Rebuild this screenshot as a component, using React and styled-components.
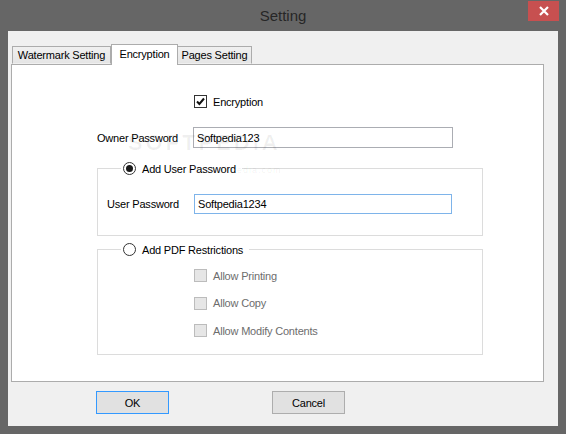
import React from 'react';
import styled, { createGlobalStyle } from 'styled-components';

const GlobalStyle = createGlobalStyle`
  html, body {
    margin: 0;
    padding: 0;
    background: #666666;
  }
  * {
    box-sizing: border-box;
  }
`;

const Window = styled.div`
  position: relative;
  width: 566px;
  height: 434px;
  background: #666666;
  font-family: "Liberation Sans", Arial, sans-serif;
  font-size: 11px;
  letter-spacing: -0.2px;
  color: #000;
  overflow: hidden;
`;

const TitleBar = styled.div`
  display: grid;
  grid-template-columns: 1fr auto 1fr;
  height: 31px;
  padding: 1px 7px 0 7px;
`;

const Title = styled.div`
  grid-column: 2;
  align-self: center;
  font-size: 15px;
  letter-spacing: 0;
  color: #262626;
  margin-top: -1px;
`;

const CloseButton = styled.div`
  grid-column: 3;
  justify-self: end;
  align-self: start;
  width: 31px;
  height: 20px;
  background: #c75050;
  display: flex;
  align-items: center;
  justify-content: center;
`;

const Client = styled.div`
  margin: 0 8px;
  height: 395px;
  background: #f0f0f0;
  padding-top: 13px;
  display: flex;
  flex-direction: column;
`;

const TabStrip = styled.div`
  display: flex;
  align-items: flex-end;
  height: 21px;
  margin-left: 4px;
  margin-bottom: -1px;
  position: relative;
  z-index: 1;
`;

const Tab = styled.div`
  width: ${(p) => p.$w}px;
  height: ${(p) => (p.$active ? 21 : 18)}px;
  margin-bottom: ${(p) => (p.$active ? 0 : 1)}px;
  margin-left: ${(p) => p.$ml || 0}px;
  border: 1px solid #acacac;
  border-bottom: ${(p) => (p.$active ? 'none' : '1px solid transparent')};
  background: ${(p) => (p.$active ? '#ffffff' : 'linear-gradient(#f0f0f0, #e5e5e5)')};
  display: flex;
  align-items: center;
  justify-content: center;
  padding-bottom: ${(p) => (p.$active ? 2 : 0)}px;
  position: relative;
  z-index: ${(p) => (p.$active ? 2 : 1)};
  white-space: nowrap;
`;

const Panel = styled.div`
  margin-left: 3px;
  width: 533px;
  height: 318px;
  border: 1px solid #acacac;
  background: #ffffff;
  padding-left: 85px;
  display: flex;
  flex-direction: column;
`;

const Row = styled.div`
  display: flex;
  align-items: center;
  height: ${(p) => p.$h || 13}px;
  margin-top: ${(p) => p.$mt || 0}px;
  padding-left: ${(p) => p.$pl || 0}px;
`;

const FieldLabel = styled.div`
  width: ${(p) => p.$w}px;
  white-space: nowrap;
`;

const TextBox = styled.div`
  width: ${(p) => p.$w}px;
  height: 100%;
  border: 1px solid ${(p) => (p.$focus ? '#7eb4ea' : '#abadb3')};
  background: #fff;
  padding-left: 3px;
  display: flex;
  align-items: center;
`;

const Box = styled.div`
  width: 13px;
  height: 13px;
  flex: none;
  border: 1px solid ${(p) => (p.$disabled ? '#bcbcbc' : '#333333')};
  background: ${(p) => (p.$disabled ? '#e6e6e6' : '#ffffff')};
  display: flex;
  align-items: center;
  justify-content: center;
  margin-right: 6px;
`;

const OptionText = styled.span`
  color: ${(p) => (p.$disabled ? '#6d6d6d' : '#000')};
  white-space: nowrap;
`;

const Group = styled.fieldset`
  margin: ${(p) => p.$mt}px 0 0 0;
  padding: 0 0 ${(p) => p.$pb}px 0;
  width: 386px;
  border: 1px solid #dcdcdc;
  min-width: 0;
`;

const Legend = styled.legend`
  margin-left: 23px;
  padding: 0 6px 0 2px;
  height: 15px;
`;

const LegendInner = styled.span`
  display: inline-flex;
  align-items: center;
  height: 15px;
`;

const Radio = styled.span`
  width: 13px;
  height: 13px;
  border-radius: 50%;
  border: 1px solid #333333;
  background: #fff;
  display: inline-flex;
  align-items: center;
  justify-content: center;
  margin-right: 6px;

  &::after {
    content: '';
    width: 7px;
    height: 7px;
    border-radius: 50%;
    background: ${(p) => (p.$checked ? '#1a1a1a' : 'transparent')};
  }
`;

const CheckList = styled.div`
  display: flex;
  flex-direction: column;
  gap: 14.5px;
  margin-top: 12px;
  padding-left: 96px;
`;

const ButtonRow = styled.div`
  display: flex;
  margin-top: 9px;
  padding-left: 88px;
  gap: 103px;
`;

const Button = styled.div`
  width: 73px;
  height: 23px;
  border: 1px solid ${(p) => (p.$default ? '#3399ff' : '#adadad')};
  background: #e1e1e1;
  display: flex;
  align-items: center;
  justify-content: center;
`;

const Watermark = styled.div`
  position: absolute;
  left: 127px;
  top: 132px;
  pointer-events: none;
  color: rgba(0, 0, 0, 0.06);
  font-size: 22px;
  font-weight: bold;
  letter-spacing: 3px;
  line-height: 1;
  text-align: center;
`;

const WatermarkSmall = styled.div`
  font-size: 9px;
  font-weight: normal;
  letter-spacing: 1px;
  margin-top: 12px;
  margin-left: 60px;
`;

const CheckMark = () => (
  <svg width="11" height="11" viewBox="0 0 11 11">
    <path d="M2 5.5 L4.4 8 L9 2.5" fill="none" stroke="#111" strokeWidth="2" />
  </svg>
);

const Check = ({ checked, disabled, children }) => (
  <Row>
    <Box $disabled={disabled}>{checked && <CheckMark />}</Box>
    <OptionText $disabled={disabled}>{children}</OptionText>
  </Row>
);

export default function App() {
  return (
    <>
      <GlobalStyle />
      <Window>
        <TitleBar>
          <Title>Setting</Title>
          <CloseButton>
            <svg width="10" height="10" viewBox="0 0 10 10">
              <path d="M1 1 L9 9 M9 1 L1 9" stroke="#fff" strokeWidth="2.2" />
            </svg>
          </CloseButton>
        </TitleBar>
        <Client>
          <TabStrip>
            <Tab $w={99}>Watermark Setting</Tab>
            <Tab $w={67} $active>Encryption</Tab>
            <Tab $w={75} $ml={-1}>Pages Setting</Tab>
          </TabStrip>
          <Panel>
            <Row $mt={30} $pl={97}>
              <Box><CheckMark /></Box>
              <OptionText>Encryption</OptionText>
            </Row>
            <Row $mt={19} $h={21}>
              <FieldLabel $w={96}>Owner Password</FieldLabel>
              <TextBox $w={260}>Softpedia123</TextBox>
            </Row>
            <Group $mt={13} $pb={21}>
              <Legend>
                <LegendInner>
                  <Radio $checked />
                  Add User Password
                </LegendInner>
              </Legend>
              <Row $mt={18} $h={20} $pl={9}>
                <FieldLabel $w={87}>User Password</FieldLabel>
                <TextBox $w={258} $focus>Softpedia1234</TextBox>
              </Row>
            </Group>
            <Group $mt={6} $pb={17}>
              <Legend>
                <LegendInner>
                  <Radio />
                  Add PDF Restrictions
                </LegendInner>
              </Legend>
              <CheckList>
                <Check disabled>Allow Printing</Check>
                <Check disabled>Allow Copy</Check>
                <Check disabled>Allow Modify Contents</Check>
              </CheckList>
            </Group>
          </Panel>
          <ButtonRow>
            <Button $default>OK</Button>
            <Button>Cancel</Button>
          </ButtonRow>
        </Client>
        <Watermark>
          SOFTPEDIA
          <WatermarkSmall>www.softpedia.com</WatermarkSmall>
        </Watermark>
      </Window>
    </>
  );
}
